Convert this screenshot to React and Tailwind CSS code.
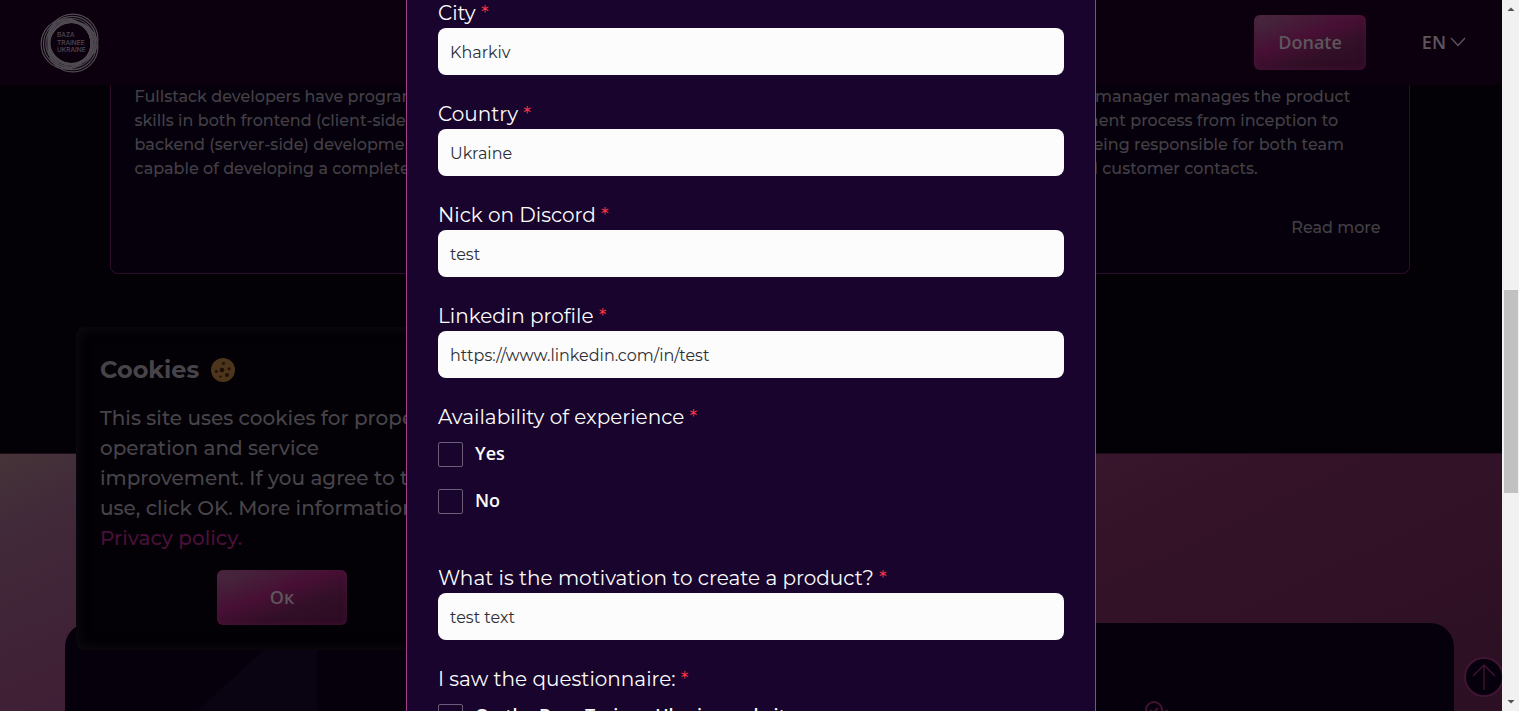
import React from "react";

const BODY = "font-['Montserrat','Inter',sans-serif] font-medium";
const HEAVY = "font-['Open_Sans',sans-serif] font-semibold";

const FIELDS = [
  { id: "city", label: "City", value: "Kharkiv" },
  { id: "country", label: "Country", value: "Ukraine" },
  { id: "discord", label: "Nick on Discord", value: "test" },
  { id: "linkedin", label: "Linkedin profile", value: "https://www.linkedin.com/in/test" },
];

function Logo() {
  const groups = [
    [-0.97, 0.2],
    [0.5, -0.86],
    [0.5, 0.86],
  ];
  return (
    <svg viewBox="0 0 60 60" className="h-15 w-15" role="img" aria-label="Baza Trainee Ukraine">
      <g fill="none" stroke="#504b52" strokeWidth="1.2">
        {groups.map(([x, y]) =>
          [25, 23.8, 22.6, 21.4].map((r) => (
            <circle key={`${x}${y}${r}`} cx={30.6 + x * (r - 20.4)} cy={30 + y * (r - 20.4)} r={r} />
          ))
        )}
      </g>
      <g fill="#504b52" fontFamily="Inter, sans-serif" fontSize="6.5">
        <text x="17" y="24">BAZA</text>
        <text x="17" y="32">TRAINEE</text>
        <text x="17" y="39">UKRAINE</text>
      </g>
    </svg>
  );
}

function Cookie() {
  return (
    <svg viewBox="0 0 24 24" className="h-6 w-6" aria-hidden="true">
      <circle cx="12" cy="12" r="12" fill="#4d351c" />
      <g fill="#1d0f08">
        <circle cx="11" cy="12" r="2.3" />
        <circle cx="12.6" cy="5.4" r="1.4" />
        <circle cx="18" cy="11" r="1.4" />
        <circle cx="16" cy="17" r="1.9" />
        <circle cx="5.3" cy="13.5" r="1.4" />
        <circle cx="9.5" cy="18.6" r="1.1" />
      </g>
    </svg>
  );
}

function GlowButton({ className, children }) {
  return (
    <button
      type="button"
      className={`${HEAVY} h-[55px] rounded-md bg-[linear-gradient(160deg,#452d3f_0%,#470f34_42%,#310f27_68%,#2b0a22_100%)] pb-[2px] text-lg text-[#5d565c] shadow-[inset_0_0_6px_rgba(80,20,62,0.7)] ${className}`}
    >
      {children}
    </button>
  );
}

function RoleCard({ lines, href }) {
  return (
    <article className="flex flex-col justify-between rounded-b-lg border border-t-0 border-[#300a2a] bg-[#06000c] px-6 pb-[33px] text-[#434046]">
      <p className="whitespace-nowrap leading-6">
        {lines.map((line) => (
          <span key={line} className="block">{line}</span>
        ))}
      </p>
      {href && <a href={href} className="mr-1 self-end leading-6">Read more</a>}
    </article>
  );
}

function Label({ htmlFor, children }) {
  return (
    <label htmlFor={htmlFor} className="block pb-[2px] text-xl leading-[26px] text-[#fcfcfc]">
      {children} <span className="text-[#ff3347]">*</span>
    </label>
  );
}

function Field({ id, label, value }) {
  return (
    <div>
      <Label htmlFor={id}>{label}</Label>
      <input
        id={id}
        type="text"
        defaultValue={value}
        className="block h-[47px] w-full rounded-lg bg-[#fcfcfc] px-3 pt-px text-base text-[#2e2e36] outline-none"
      />
    </div>
  );
}

function Check({ id, children }) {
  return (
    <div className="flex items-center gap-3">
      <input id={id} type="checkbox" className="h-[25px] w-[25px] shrink-0 appearance-none rounded-xs border border-[#6b5f78]" />
      <label htmlFor={id} className={`${HEAVY} pb-1 text-lg leading-5 text-[#fcfcfc]`}>{children}</label>
    </div>
  );
}

export default function App() {
  return (
    <div className={`${BODY} relative h-screen overflow-hidden bg-[#030006]`}>
      <div className="flex h-full flex-col">
        <header className="flex h-[85px] shrink-0 items-center justify-between bg-[#0d000e] pr-[53px] pl-10">
          <Logo />
          <div className="flex items-center gap-14">
            <GlowButton className="px-6">Donate</GlowButton>
            <button type="button" className={`${HEAVY} flex items-center gap-1 pb-px text-lg text-[#5d565c]`}>
              EN
              <svg viewBox="0 0 16 10" className="h-[10px] w-4" fill="none" stroke="currentColor" strokeWidth="1.3" aria-hidden="true">
                <path d="M1 1l7 7.5L15 1" />
              </svg>
            </button>
          </div>
        </header>

        <section className="mx-auto grid h-[189px] w-full max-w-[1300px] shrink-0 grid-cols-3 gap-6">
          <RoleCard
            lines={[
              "Fullstack developers have programming",
              "skills in both frontend (client-side) and",
              "backend (server-side) development and are",
              "capable of developing a complete product.",
            ]}
          />
          <RoleCard lines={[]} />
          <RoleCard
            href="#manager"
            lines={[
              "A project manager manages the product",
              "development process from inception to",
              "release, being responsible for both team",
              "and for all customer contacts.",
            ]}
          />
        </section>

        <section className="mt-[179px] flex-1 border-t border-[#1f0d1a] bg-[linear-gradient(155deg,#453438_0%,#412a39_8%,#402237_22%,#3b182f_46%,#341329_62%,#2c0f22_100%)] px-[65px] pt-[169px]">
          <div className="relative h-full overflow-hidden rounded-t-3xl bg-[#06000c]">
            <svg viewBox="0 0 260 90" className="absolute top-0 left-0 h-[90px] w-[260px]" aria-hidden="true">
              <path d="M130 90L226 2h26v88z" fill="#0a0412" />
            </svg>
            <svg viewBox="0 0 30 30" className="absolute top-[76px] left-[1078px] h-[30px] w-[30px]" fill="none" stroke="#401332" strokeWidth="2" aria-hidden="true">
              <circle cx="11" cy="11" r="8" />
              <path d="M7 11l3 3 5-5M22 12h3" />
            </svg>
          </div>
        </section>
      </div>

      <aside className="absolute bottom-[61px] left-[76px] w-[412px] rounded-lg bg-[#030006] px-6 py-[25px] text-[#474449] shadow-[inset_0_0_14px_rgba(22,18,26,0.7)]">
        <h2 className="flex items-center gap-3 text-2xl leading-9 font-bold">
          Cookies <Cookie />
        </h2>
        <p className="mt-[15px] text-xl leading-[30px] whitespace-nowrap">
          <span className="block">This site uses cookies for proper</span>
          <span className="block">operation and service</span>
          <span className="block">improvement. If you agree to their</span>
          <span className="block">use, click OK. More information:</span>
          <a href="#privacy" className="block text-[#491039]">Privacy policy.</a>
        </p>
        <GlowButton className="mx-auto mt-[17px] block w-[130px]">Ок</GlowButton>
      </aside>

      <button
        type="button"
        aria-label="Back to top"
        className="absolute right-[15px] bottom-[14px] flex h-10 w-10 items-center justify-center rounded-full border-2 border-[#401435] bg-[#06000c]"
      >
        <svg viewBox="0 0 26 28" className="h-7 w-[26px] shrink-0" fill="none" stroke="#3d1330" strokeWidth="1.5">
          <path d="M13 27V2M2 13L13 2l11 11" />
        </svg>
      </button>

      <div className="absolute inset-0 flex justify-center pr-[17px]">
        <form aria-label="Questionnaire" className="h-full w-[690px] max-w-full overflow-hidden border-x border-[#a63c8e] bg-[#18042c] px-[31px] font-normal">
          <div className="flex flex-col gap-[26px]">
            {FIELDS.map((f) => (
              <Field key={f.id} {...f} />
            ))}
            <fieldset className="pb-[25px]">
              <legend className="block pb-3 text-xl leading-[26px] text-[#fcfcfc]">
                Availability of experience <span className="text-[#ff3347]">*</span>
              </legend>
              <div className="flex flex-col gap-[22px]">
                <Check id="yes">Yes</Check>
                <Check id="no">No</Check>
              </div>
            </fieldset>
            <Field id="motivation" label="What is the motivation to create a product?" value="test text" />
            <fieldset>
              <legend className="block pb-3 text-xl leading-[26px] text-[#fcfcfc]">
                I saw the questionnaire: <span className="text-[#ff3347]">*</span>
              </legend>
              <Check id="source">On the Baza Trainee Ukraine website</Check>
            </fieldset>
          </div>
        </form>
      </div>

      <div aria-hidden="true" className="absolute inset-y-0 right-0 flex w-[17px] flex-col items-center bg-[#f1f1f1]">
        <svg viewBox="0 0 17 17" className="h-[17px] w-[17px]" fill="#505050">
          <path d="M5.500 11h7L9 7.500z" />
        </svg>
        <div className="mt-[273px] h-[203px] w-[14px] bg-[#c1c1c1]" />
        <svg viewBox="0 0 17 17" className="mt-auto h-[17px] w-[17px]" fill="#505050">
          <path d="M5.500 6h7L9 9.500z" />
        </svg>
      </div>
    </div>
  );
}
